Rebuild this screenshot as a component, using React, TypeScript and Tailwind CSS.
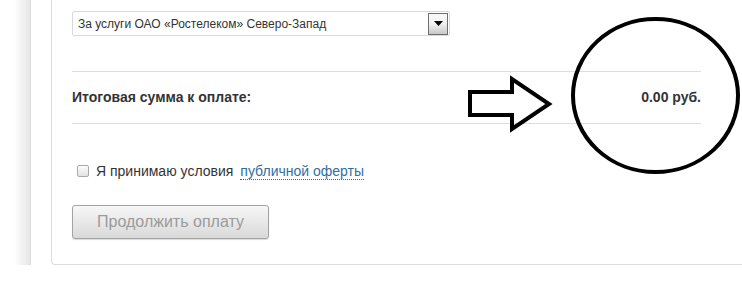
import React from "react";

export default function App() {
  return (
    <div
      className="relative w-[742px] h-[290px] bg-white overflow-hidden"
      style={{ fontFamily: '"Liberation Sans", Arial, sans-serif' }}
    >
      <div className="flex">
        <div className="w-[31px] h-[265px] flex">
          <div className="w-[14px]" />
          <div className="flex-1 bg-gradient-to-r from-white to-[#e6e6e6]" />
          <div className="w-px bg-[#dedede]" />
        </div>
        <div className="ml-[20px] flex-1 h-[265px] border-l border-b border-[#dcdcdc] rounded-bl-[4px] pl-[20px] flex flex-col">
          <div className="mt-[11px] h-[25px] w-[378px] border border-[#d9d9d9] rounded-[2px] flex items-center">
            <span className="pl-[5px] text-[12px] text-[#333]">
              За услуги ОАО «Ростелеком» Северо-Запад
            </span>
            <div className="ml-auto mr-[1px] w-[20px] h-[22px] border border-[#6f6f6f] bg-gradient-to-b from-[#fafafa] via-[#f0f0f0] to-[#c8c8c8] flex items-center justify-center">
              <svg width="9" height="5" viewBox="0 0 9 5">
                <polygon points="0,0 9,0 4.5,5" fill="#000" />
              </svg>
            </div>
          </div>
          <div className="mt-[35px] w-[629px] h-[53px] border-t border-b border-[#dddddd] flex items-center justify-between">
            <span className="text-[14px] font-bold text-[#333]">Итоговая сумма к оплате:</span>
            <span className="text-[14px] font-bold text-[#333]">0.00 руб.</span>
          </div>
          <div className="mt-[37px] h-[20px] flex items-center">
            <div className="ml-[5px] w-[12px] h-[12px] rounded-[2px] border border-[#a9a9a9] bg-gradient-to-b from-[#fdfdfd] to-[#e2e2e2]" />
            <span className="ml-[7px] text-[14px] text-[#333]">Я принимаю условия</span>
            <span className="ml-[7px] text-[14px] text-[#2f6f9f] border-b border-dotted border-[#2f6f9f] leading-[16px]">
              публичной оферты
            </span>
          </div>
          <div className="mt-[24px] w-[197px] h-[34px] rounded-[3px] border border-[#a3a3a3] bg-gradient-to-b from-[#f7f7f7] to-[#d9d9d9] flex items-center justify-center shadow-[0_1px_1px_rgba(0,0,0,0.15)]">
            <span className="text-[16px] text-[#9a9a9a]">Продолжить оплату</span>
          </div>
        </div>
      </div>
      <svg className="absolute inset-0 pointer-events-none" width="742" height="290" viewBox="0 0 742 290">
        <polygon
          points="470,92 512,92 512,79 549,104 512,129 512,115 470,115"
          fill="none"
          stroke="#000"
          strokeWidth="4"
          strokeLinejoin="miter"
        />
        <ellipse cx="655.5" cy="95.5" rx="82.5" ry="76.5" fill="none" stroke="#000" strokeWidth="4" />
      </svg>
    </div>
  );
}
